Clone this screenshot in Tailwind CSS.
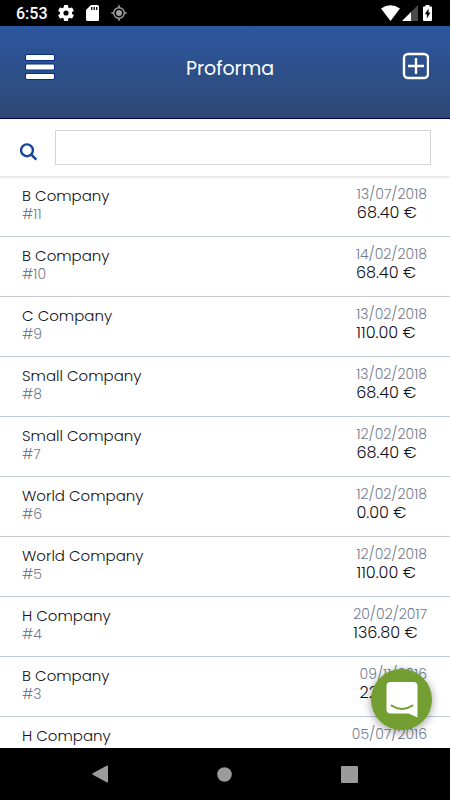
<!DOCTYPE html>
<html lang="en">
<head>
<meta charset="utf-8">
<meta name="viewport" content="width=device-width, initial-scale=1">
<title>Proforma</title>
<script src="https://cdn.jsdelivr.net/npm/@tailwindcss/browser@4"></script>
</head>
<body class="bg-white font-['Poppins','Inter',sans-serif] font-light">
<div class="flex h-screen flex-col overflow-hidden">
  <!-- Status bar -->
  <div class="flex h-[26px] shrink-0 items-center bg-black pl-4 pr-4 text-white">
    <span class="w-[42px] pt-px font-['Roboto',sans-serif] text-base font-medium">6:53</span>
    <svg class="h-4 w-4" viewBox="2 2 20 20" fill="#fff"><path d="M19.43 12.98c.04-.32.07-.64.07-.98s-.03-.66-.07-.98l2.11-1.65c.19-.15.24-.42.12-.64l-2-3.46c-.12-.22-.39-.3-.61-.22l-2.49 1c-.52-.4-1.08-.73-1.69-.98l-.38-2.65C14.46 2.18 14.25 2 14 2h-4c-.25 0-.46.18-.49.42l-.38 2.65c-.61.25-1.17.59-1.69.98l-2.49-1c-.23-.09-.49 0-.61.22l-2 3.46c-.13.22-.07.49.12.64l2.11 1.65c-.04.32-.07.65-.07.98s.03.66.07.98l-2.11 1.65c-.19.15-.24.42-.12.64l2 3.46c.12.22.39.3.61.22l2.49-1c.52.4 1.08.73 1.69.98l.38 2.65c.03.24.24.42.49.42h4c.25 0 .46-.18.49-.42l.38-2.65c.61-.25 1.17-.59 1.69-.98l2.49 1c.23.09.49 0 .61-.22l2-3.46c.12-.22.07-.49-.12-.64l-2.11-1.65zM12 15.2a3.2 3.2 0 1 1 0-6.4 3.2 3.2 0 0 1 0 6.4z"/></svg>
    <svg class="ml-3 h-4 w-[13px]" viewBox="0 0 13 16"><path fill="#fff" d="M5 0h6.500Q13 0 13 1.500V14.500Q13 16 11.500 16H1.500Q0 16 0 14.500V5Z"/><path stroke="#000" stroke-width="1.300" d="M5.700 2v3M8.200 2v3M10.700 2v3"/></svg>
    <svg class="ml-3 h-4 w-4" viewBox="0 0 16 16" fill="none" stroke="#a0a0a0"><circle cx="8" cy="8" r="5.300" stroke-width="1.400"/><circle cx="8" cy="8" r="3" fill="#a0a0a0" stroke="none"/><path stroke-width="1.600" d="M8 .3v2.500M8 13.200v2.500M.3 8h2.500M13.200 8h2.500"/></svg>
    <svg class="ml-auto h-4 w-[19px]" viewBox="0 0 19 16"><path fill="#fff" d="M0 3.500Q9.500-3 19 3.500L9.500 16Z"/></svg>
    <svg class="ml-0.5 h-4 w-4" viewBox="0 0 16 16"><path fill="#4a4a4a" d="M16 0V16H9V7Z"/><path fill="#fff" d="M9 7V16H0Z"/></svg>
    <svg class="ml-[5px] mr-0.5 h-4 w-[9px]" viewBox="0 0 9 16"><path fill="#fff" d="M2.500 0h4v1.500H8q1 0 1 1V15q0 1-1 1H1q-1 0-1-1V2.500q0-1 1-1h1.500Z"/><path fill="#000" d="M5.500 3.500 1.800 9.300h2.100v4.200l3.500-6H5.500Z"/></svg>
  </div>

  <!-- Title bar -->
  <header class="flex h-[93px] shrink-0 items-start justify-between border-b border-[#000064] bg-linear-to-b from-[#2c579f] to-[#2e4875] px-[21px] pt-6 text-white">
    <button type="button" aria-label="Menu" class="flex h-[34px] w-[38px] items-center pl-1">
      <svg class="h-[26px] w-[30px] shrink-0" viewBox="0 0 30 26"><g fill="#0a2f86"><rect width="30" height="7" rx="2"/><rect y="9.500" width="30" height="7" rx="2"/><rect y="19" width="30" height="7" rx="2"/></g><g fill="#fff"><rect x="1" y="1" width="28" height="5" rx="1"/><rect x="1" y="10.500" width="28" height="5" rx="1"/><rect x="1" y="20" width="28" height="5" rx="1"/></g></svg>
    </button>
    <h1 class="text-[19px] leading-[38px] font-normal">Proforma</h1>
    <button type="button" aria-label="Add proforma" class="flex h-8 w-7 items-center">
      <svg class="h-7 w-7" viewBox="0 0 28 28" fill="none" stroke="#fff" stroke-width="2.400"><rect x="3" y="2" width="24" height="24" rx="4"/><path d="M15 6v16M7 14h16"/></svg>
    </button>
  </header>

  <!-- Search -->
  <form class="relative flex h-[57px] shrink-0 items-center pl-5 pr-[19px] shadow-[0_1px_3px_rgba(0,0,0,0.16)]">
    <label for="search" class="mt-2 w-[35px]" aria-label="Search">
      <svg class="h-[18px] w-[18px]" viewBox="0 0 18 18" fill="none" stroke="#164796" stroke-width="2.400"><circle cx="7" cy="7.300" r="5.900"/><path stroke-width="2.600" d="m11.300 11.600 5 5"/></svg>
    </label>
    <input id="search" type="text" class="h-[35px] min-w-0 flex-1 border border-[#d5d5d5] bg-white px-2 text-base outline-none">
  </form>

  <!-- Proforma list -->
  <main class="min-h-0 flex-1 overflow-hidden pt-px">
    <ul id="list"></ul>
  </main>

  <!-- System navigation -->
  <nav class="flex h-[52px] shrink-0 items-center justify-between bg-black px-[92px]">
    <button type="button" aria-label="Back"><svg class="h-[18px] w-4" viewBox="0 0 16 18" fill="#9b9b9b"><path d="M15 .5q1-.3 1 .7v15.600q0 1-1 .7L.8 9.700q-1-.7 0-1.400Z"/></svg></button>
    <button type="button" aria-label="Home"><svg class="h-[15px] w-[15px]" viewBox="0 0 15 15" fill="#9b9b9b"><circle cx="7.500" cy="7.500" r="7.300"/></svg></button>
    <button type="button" aria-label="Recent apps"><svg class="h-[17px] w-[17px]" viewBox="0 0 17 17" fill="#9b9b9b"><rect width="17" height="17" rx="1"/></svg></button>
  </nav>
</div>

<button type="button" aria-label="Open chat" class="absolute right-[18px] bottom-[70px] flex h-[61px] w-[61px] items-center justify-center rounded-full bg-[#739f32] shadow-[0_2px_10px_rgba(0,0,0,0.4)]">
  <svg class="h-9 w-8" viewBox="0 0 32 36"><path fill="#fff" d="M4.500 0h23Q31.500 0 31.500 4v31.500l-9-4h-18Q.5 31.500.5 27.500V4Q.5 0 4.500 0Z"/><path fill="none" stroke="#739f32" stroke-width="2" stroke-linecap="round" d="M5.500 23.500q10.500 7 21 0"/></svg>
</button>

<script>
const rows = [
  ['B Company', '#11', '13/07/2018', '68.40 €'],
  ['B Company', '#10', '14/02/2018', '68.40 €'],
  ['C Company', '#9', '13/02/2018', '110.00 €'],
  ['Small Company', '#8', '13/02/2018', '68.40 €'],
  ['Small Company', '#7', '12/02/2018', '68.40 €'],
  ['World Company', '#6', '12/02/2018', '0.00 €'],
  ['World Company', '#5', '12/02/2018', '110.00 €'],
  ['H Company', '#4', '20/02/2017', '136.80 €'],
  ['B Company', '#3', '09/11/2016', '22.80 €'],
  ['H Company', '', '05/07/2016', '']
];
document.getElementById('list').innerHTML = rows.map(([name, id, date, amount]) => `
  <li class="flex h-[60px] justify-between border-b border-[#c0cbdb] pl-[22px] pr-[23px] pt-[9px]">
    <div><p class="text-[15px] leading-5 text-[#101018]">${name}</p><p class="text-sm leading-4 text-[#707a8c]">${id}</p></div>
    <div><p class="text-sm leading-4 text-[#707a8c]">${date}</p><p class="text-base leading-[22px] text-[#101018]">${amount}</p></div>
  </li>`).join('');
</script>
</body>
</html>
